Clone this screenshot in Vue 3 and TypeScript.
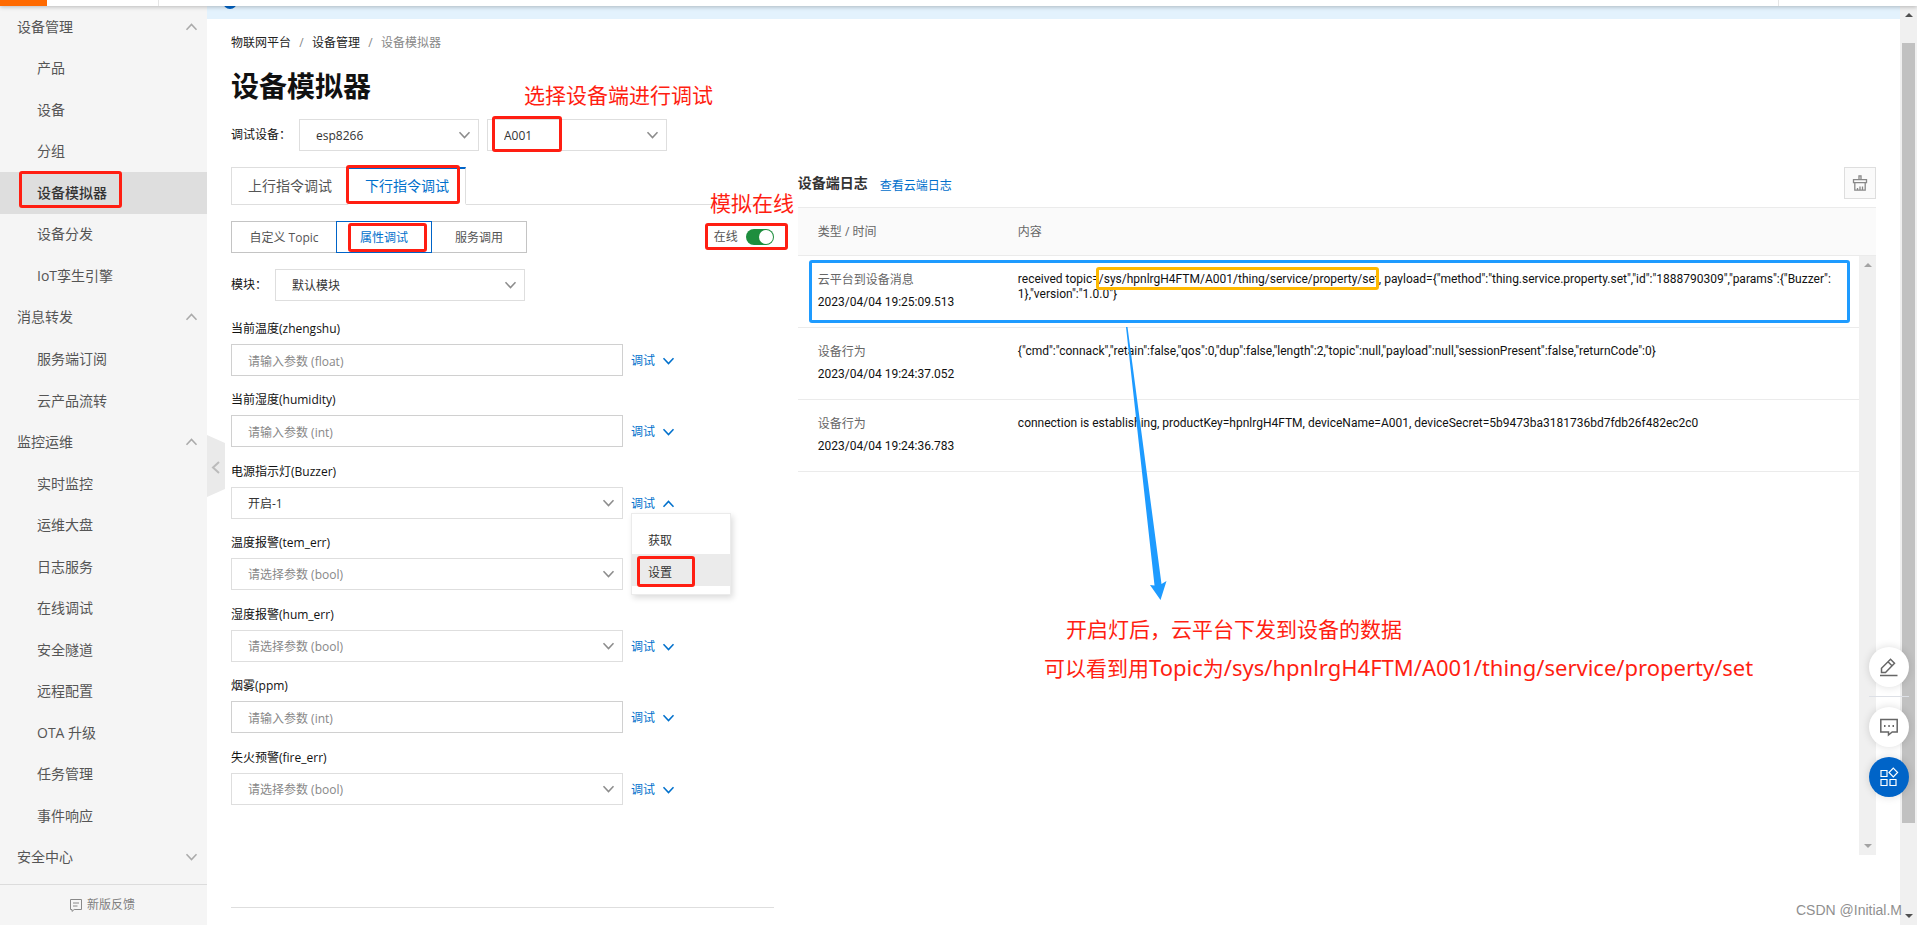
<script setup lang="ts">
import { ref } from 'vue'

interface NavRow {
  label: string
  level: 1 | 2
  open?: boolean
  active?: boolean
}

interface Field {
  id: string
  name: string
  kind: 'input' | 'select'
  hint: string
  value?: string
  open?: boolean
  covered?: boolean
}

interface LogRow {
  type: string
  time: string
  content: string
}

const nav: NavRow[] = [
  { label: '设备管理', level: 1, open: true },
  { label: '产品', level: 2 },
  { label: '设备', level: 2 },
  { label: '分组', level: 2 },
  { label: '设备模拟器', level: 2, active: true },
  { label: '设备分发', level: 2 },
  { label: 'IoT孪生引擎', level: 2 },
  { label: '消息转发', level: 1, open: true },
  { label: '服务端订阅', level: 2 },
  { label: '云产品流转', level: 2 },
  { label: '监控运维', level: 1, open: true },
  { label: '实时监控', level: 2 },
  { label: '运维大盘', level: 2 },
  { label: '日志服务', level: 2 },
  { label: '在线调试', level: 2 },
  { label: '安全隧道', level: 2 },
  { label: '远程配置', level: 2 },
  { label: 'OTA 升级', level: 2 },
  { label: '任务管理', level: 2 },
  { label: '事件响应', level: 2 },
  { label: '安全中心', level: 1, open: false },
]

const fields: Field[] = [
  { id: 'zhengshu', name: '当前温度(zhengshu)', kind: 'input', hint: '请输入参数 (float)' },
  { id: 'humidity', name: '当前湿度(humidity)', kind: 'input', hint: '请输入参数 (int)' },
  { id: 'buzzer', name: '电源指示灯(Buzzer)', kind: 'select', hint: '请选择参数 (bool)', value: '开启-1', open: true },
  { id: 'tem_err', name: '温度报警(tem_err)', kind: 'select', hint: '请选择参数 (bool)', covered: true },
  { id: 'hum_err', name: '湿度报警(hum_err)', kind: 'select', hint: '请选择参数 (bool)' },
  { id: 'ppm', name: '烟雾(ppm)', kind: 'input', hint: '请输入参数 (int)' },
  { id: 'fire_err', name: '失火预警(fire_err)', kind: 'select', hint: '请选择参数 (bool)' },
]

const logs: LogRow[] = [
  {
    type: '云平台到设备消息',
    time: '2023/04/04 19:25:09.513',
    content:
      'received topic=/sys/hpnlrgH4FTM/A001/thing/service/property/set, payload={"method":"thing.service.property.set","id":"1888790309","params":{"Buzzer":\n1},"version":"1.0.0"}',
  },
  {
    type: '设备行为',
    time: '2023/04/04 19:24:37.052',
    content:
      '{"cmd":"connack","retain":false,"qos":0,"dup":false,"length":2,"topic":null,"payload":null,"sessionPresent":false,"returnCode":0}',
  },
  {
    type: '设备行为',
    time: '2023/04/04 19:24:36.783',
    content:
      'connection is establishing, productKey=hpnlrgH4FTM, deviceName=A001, deviceSecret=5b9473ba3181736bd7fdb26f482ec2c0',
  },
]

const online = ref(true)
</script>

<template>
  <div class="page">
    <header class="topbar">
      <span class="brand"></span>
      <span class="menu-cell"></span>
      <span class="user-cell"></span>
    </header>

    <aside class="sidebar">
      <nav class="nav">
        <template v-for="row in nav" :key="row.label">
          <button v-if="row.level === 1" type="button" class="nav-row group">
            <span>{{ row.label }}</span>
            <svg class="chev" :class="{ up: row.open }" viewBox="0 0 12 8"><path d="M1 1.2 6 6.6 11 1.2" /></svg>
          </button>
          <a v-else href="#" class="nav-row item" :class="{ active: row.active }">{{ row.label }}</a>
        </template>
      </nav>
      <a href="#" class="feedback">
        <svg viewBox="0 0 12 13"><path d="M.5.5h11v10H4.2L2 12.4v-1.9H.5zM3 4h6M3 7h4.5" /></svg>
        <span>新版反馈</span>
      </a>
    </aside>

    <main class="main">
      <button type="button" class="collapse" aria-label="collapse">
        <svg viewBox="0 0 18 62">
          <path class="tab-shape" d="M0 0 18 8v46L0 62z" />
          <path class="tab-arrow" d="M12 27 6 32.5 12 38" />
        </svg>
      </button>

      <div class="notice"><i class="notice-icon"></i></div>

      <div class="content">
        <nav class="crumbs">
          <a href="#">物联网平台</a><i>/</i><a href="#">设备管理</a><i>/</i><span>设备模拟器</span>
        </nav>
        <h1>设备模拟器</h1>

        <div class="device-row">
          <label for="product">调试设备：</label>
          <span class="select product">
            <select id="product"><option>esp8266</option></select>
            <svg class="chev" viewBox="0 0 12 8"><path d="M1 1.2 6 6.6 11 1.2" /></svg>
          </span>
          <span class="select device">
            <select aria-label="device"><option>A001</option></select>
            <svg class="chev" viewBox="0 0 12 8"><path d="M1 1.2 6 6.6 11 1.2" /></svg>
          </span>
        </div>

        <div class="workspace">
          <section class="debug">
            <div class="tabs">
              <button type="button" class="tab">上行指令调试</button>
              <button type="button" class="tab current">下行指令调试</button>
            </div>

            <div class="mode-row">
              <div class="modes">
                <button type="button" class="mode first">自定义 Topic</button>
                <button type="button" class="mode current">属性调试</button>
                <button type="button" class="mode">服务调用</button>
              </div>
              <label class="online">
                <span>在线</span>
                <input v-model="online" type="checkbox" role="switch" />
              </label>
            </div>

            <div class="module-row">
              <label for="module">模块：</label>
              <span class="select module">
                <select id="module"><option>默认模块</option></select>
                <svg class="chev" viewBox="0 0 12 8"><path d="M1 1.2 6 6.6 11 1.2" /></svg>
              </span>
            </div>

            <form class="fields" @submit.prevent>
              <div v-for="f in fields" :key="f.id" class="field">
                <label :for="f.id">{{ f.name }}</label>
                <div class="field-row">
                  <input v-if="f.kind === 'input'" :id="f.id" type="text" class="text" :placeholder="f.hint" />
                  <span v-else class="select wide">
                    <select :id="f.id" :class="{ empty: !f.value }"><option>{{ f.value ?? f.hint }}</option></select>
                    <svg class="chev" viewBox="0 0 12 8"><path d="M1 1.2 6 6.6 11 1.2" /></svg>
                  </span>
                  <div v-if="!f.covered" class="action">
                    <button type="button" class="debug-btn">
                      <span>调试</span>
                      <svg class="chev" :class="{ up: f.open }" viewBox="0 0 12 8"><path d="M1 1.2 6 6.6 11 1.2" /></svg>
                    </button>
                    <div v-if="f.open" class="popup">
                      <button type="button">获取</button>
                      <button type="button" class="hover">设置</button>
                    </div>
                  </div>
                </div>
              </div>
            </form>
          </section>

          <section class="log">
            <div class="log-head">
              <h2>设备端日志</h2>
              <a href="#">查看云端日志</a>
              <button type="button" class="clear" aria-label="clear">
                <svg viewBox="0 0 16 16">
                  <path d="M7 4.5V.8h2v3.7M1.500 4.700h13v3h-13zM2.800 7.700v7.500h10.400V7.700M5.500 15v-2M8 15v-3.500M10.500 15v-3.500" />
                </svg>
              </button>
            </div>
            <div class="log-body">
              <table>
                <thead>
                  <tr><th class="col-type">类型 / 时间</th><th>内容</th></tr>
                </thead>
                <tbody>
                  <tr v-for="l in logs" :key="l.time">
                    <td class="meta"><span class="type">{{ l.type }}</span><span class="time">{{ l.time }}</span></td>
                    <td class="text-cell">{{ l.content }}</td>
                  </tr>
                </tbody>
              </table>
              <div class="inner-scroll"><i class="tri up"></i><i class="tri down"></i></div>
            </div>
          </section>
        </div>
      </div>
    </main>

    <div class="page-scroll"><i class="tri up"></i><span class="thumb"></span><i class="tri down"></i></div>

    <div class="float-tools">
      <button type="button" aria-label="edit">
        <svg viewBox="0 0 20 20"><path d="M2.5 15.500v-4.300L11.500 2.300l4 4-9 9.200zM9 4.800l4 4M1 18.500h17.500" /></svg>
      </button>
      <hr />
      <button type="button" aria-label="chat">
        <svg viewBox="0 0 20 20"><path d="M1.800 2.500h16.400v12.500h-5L9.500 18v-3H1.800z" /><path class="dots" d="M5 9h1.500M9.300 9h1.500M13.500 9H15" /></svg>
      </button>
      <button type="button" class="primary" aria-label="apps">
        <svg viewBox="0 0 20 20"><path d="M2 3.500h6v6H2zM2 12.500h6v6H2zM11 12.500h6v6h-6zM14.300 1.200l4.300 4.300-4.300 4.300L10 5.500z" /></svg>
      </button>
    </div>

    <div class="marks">
      <i class="box red m-nav"></i>
      <i class="box red m-device"></i>
      <i class="box red m-tab"></i>
      <i class="box red m-mode"></i>
      <i class="box red m-online"></i>
      <i class="box red m-set"></i>
      <i class="box blue m-log"></i>
      <i class="box yellow m-topic"></i>
      <svg class="arrow" viewBox="0 0 44 274"><path d="M0 0H1.500L35.500 257 40.500 254 34.500 273 24 258 28.500 258.500z" /></svg>
      <p class="note n-choose">选择设备端进行调试</p>
      <p class="note n-online">模拟在线</p>
      <p class="note n-open">开启灯后，云平台下发到设备的数据</p>
      <p class="note n-topic">可以看到用<span>Topic</span>为<span>/sys/hpnlrgH4FTM/A001/thing/service/property/set</span></p>
      <p class="credit">CSDN @Initial.M</p>
    </div>
  </div>
</template>

<style>
body {
  overflow: hidden;
}
</style>

<style scoped>
.page {
  position: relative;
  display: flex;
  height: 100vh;
  overflow: hidden;
  background: #fff;
  color: #111;
  font-family: "Open Sans", "Noto Sans CJK SC", sans-serif;
  font-size: 12px;
  line-height: 18px;
}
button, input, select {
  margin: 0;
  font: inherit;
  color: inherit;
  box-sizing: border-box;
}
button {
  padding: 0;
  border: 0;
  background: none;
  text-align: left;
}
a {
  color: inherit;
  text-decoration: none;
}
h1, h2, p {
  margin: 0;
}
.chev {
  flex: none;
  width: 13px;
  height: 8px;
  fill: none;
  stroke: #8c8c8c;
  stroke-width: 1.5;
}
.chev.up {
  transform: rotate(180deg);
}

.topbar {
  position: absolute;
  inset: 0 0 auto 0;
  z-index: 5;
  display: flex;
  height: 6px;
  background: #fff;
  box-shadow: 0 1px 4px rgba(0, 0, 0, 0.25);
}
.brand {
  width: 47px;
  background: #ff6a00;
}
.menu-cell {
  width: 111px;
  border-right: 1px solid #e5e5e5;
}
.user-cell {
  width: 138px;
  margin-left: auto;
  border-left: 1px solid #e5e5e5;
}

.sidebar {
  display: flex;
  flex: none;
  flex-direction: column;
  width: 207px;
  background: #f5f5f5;
  color: #555;
  font-size: 14px;
}
.nav {
  display: flex;
  flex: 1;
  flex-direction: column;
  padding: 6px 0;
}
.nav-row {
  display: flex;
  flex: 1;
  align-items: center;
  justify-content: space-between;
}
.group {
  padding: 0 9px 0 17px;
}
.group .chev {
  stroke: #aaa;
}
.item {
  padding-left: 37px;
}
.item.active {
  background: #dedede;
  color: #333;
  font-weight: 500;
}
.feedback {
  display: flex;
  align-items: center;
  justify-content: center;
  gap: 5px;
  height: 40px;
  padding-right: 2px;
  border-top: 1px solid #dcdcdc;
  color: #808080;
  font-size: 12px;
}
.feedback svg {
  width: 12px;
  height: 13px;
  fill: none;
  stroke: #888;
}

.main {
  position: relative;
  flex: 1;
  min-width: 0;
  padding-top: 6px;
}
.collapse {
  position: absolute;
  top: 435px;
  left: 0;
  width: 18px;
  height: 62px;
}
.collapse svg {
  display: block;
}
.tab-shape {
  fill: #eaeaea;
}
.tab-arrow {
  fill: none;
  stroke: #bbb;
  stroke-width: 2;
}
.notice {
  position: relative;
  height: 13px;
  background: #e3f2fd;
}
.notice-icon {
  position: absolute;
  top: -11px;
  left: 16px;
  width: 14px;
  height: 14px;
  border-radius: 50%;
  background: #0064c8;
}
.content {
  padding: 15px 24px 0;
}
.crumbs {
  display: flex;
  color: #222;
}
.crumbs i {
  width: 21px;
  color: #888;
  font-style: normal;
  text-align: center;
}
.crumbs span {
  color: #888;
}
h1 {
  margin-top: 16px;
  font-size: 28px;
  font-weight: 700;
  line-height: 36px;
}
.device-row, .module-row {
  display: flex;
  align-items: center;
}
.device-row {
  margin-top: 15px;
}
.device-row label {
  width: 68px;
  white-space: nowrap;
}
.device {
  margin-left: 8px;
}
.select {
  position: relative;
  display: flex;
  align-items: center;
  height: 32px;
}
.product, .device {
  width: 180px;
}
.select select {
  width: 100%;
  height: 32px;
  padding: 2px 36px 0 16px;
  border: 1px solid #dedede;
  border-radius: 0;
  background: #fff;
  color: #333;
  appearance: none;
}
.select select.empty {
  color: #888;
}
.select .chev {
  position: absolute;
  right: 8px;
  pointer-events: none;
}

.workspace {
  display: flex;
  gap: 24px;
  margin-top: 16px;
}
.debug {
  flex: 0 0 33%;
  min-height: 740px;
  border-bottom: 1px solid #dedede;
}
.tabs {
  display: flex;
  height: 38px;
}
.tabs::after {
  flex: 1;
  border-bottom: 1px solid #dedede;
  content: "";
}
.tab {
  padding: 0 16px;
  border: 1px solid #dedede;
  border-right: 0;
  color: #555;
  font-size: 14px;
}
.tab.current {
  border-top: 2px solid #0064c8;
  border-right: 1px solid #dedede;
  border-bottom: 2px solid #fff;
  color: #0070cc;
}
.mode-row {
  display: flex;
  align-items: center;
  justify-content: space-between;
  margin-top: 16px;
}
.modes {
  display: flex;
}
.mode {
  width: 95px;
  height: 32px;
  padding-top: 2px;
  border: 1px solid #c4c4c4;
  border-left: 0;
  color: #555;
  text-align: center;
}
.mode.first {
  width: 105px;
  border-right: 0;
  border-left: 1px solid #c4c4c4;
}
.mode.current {
  width: 96px;
  border: 1px solid #0064c8;
  color: #0070cc;
}
.online {
  display: flex;
  align-items: center;
  gap: 8px;
  color: #555;
}
.online input {
  position: relative;
  width: 28px;
  height: 16px;
  border-radius: 8px;
  background: #bbb;
  appearance: none;
}
.online input:checked {
  background: #1e8e3e;
}
.online input::before {
  position: absolute;
  top: 1px;
  left: 1px;
  width: 14px;
  height: 14px;
  border-radius: 50%;
  background: #fff;
  content: "";
}
.online input:checked::before {
  left: 13px;
}
.module-row {
  margin-top: 16px;
}
.module-row label {
  width: 44px;
  white-space: nowrap;
}
.module {
  width: 250px;
}
.fields {
  display: grid;
  grid-auto-rows: 1fr;
  height: 500px;
  margin-top: 19px;
}
.field {
  display: flex;
  flex-direction: column;
  gap: 6px;
}
.field-row {
  display: flex;
  gap: 8px;
}
.text, .wide {
  width: 392px;
}
.text {
  height: 32px;
  padding: 2px 16px 0;
  border: 1px solid #d0d0d0;
  border-radius: 0;
  outline: 0;
}
.text::placeholder {
  color: #888;
  opacity: 1;
}
.action {
  position: relative;
}
.debug-btn {
  display: flex;
  align-items: center;
  gap: 7px;
  height: 32px;
  padding-top: 2px;
  color: #0070cc;
}
.debug-btn .chev {
  stroke: #0070cc;
}
.popup {
  position: absolute;
  top: 26px;
  left: 0;
  z-index: 2;
  width: 100px;
  padding: 8px 0;
  box-sizing: border-box;
  border: 1px solid #ebebeb;
  background: #fff;
  box-shadow: 2px 3px 6px rgba(0, 0, 0, 0.14);
}
.popup button {
  display: block;
  width: 100%;
  height: 32px;
  padding: 6px 16px 0;
  color: #333;
}
.popup .hover {
  background: #ebebeb;
}

.log {
  flex: 1;
  min-width: 0;
}
.log-head {
  display: flex;
  align-items: center;
  gap: 12px;
  height: 32px;
}
h2 {
  color: #333;
  font-size: 14px;
  font-weight: 700;
}
.log-head a {
  padding-top: 6px;
  color: #0070cc;
}
.clear {
  display: flex;
  align-items: center;
  justify-content: center;
  width: 32px;
  height: 32px;
  margin-left: auto;
  border: 1px solid #dedede;
  background: #fafafa;
}
.clear svg {
  width: 16px;
  height: 16px;
  fill: none;
  stroke: #888;
  stroke-width: 1.3;
}
.log-body {
  position: relative;
  height: 648px;
  margin-top: 8px;
}
table {
  width: 100%;
  border-collapse: separate;
  border-spacing: 0;
  table-layout: fixed;
}
th {
  height: 47px;
  padding: 0 20px;
  border-top: 1px solid #ebebeb;
  border-bottom: 1px solid #ebebeb;
  background: #fafafa;
  color: #666;
  font-weight: 400;
  text-align: left;
}
.col-type {
  width: 160px;
}
td {
  border-bottom: 1px solid #ebebeb;
  vertical-align: top;
}
.meta {
  height: 59px;
  padding: 12px 20px 0;
}
.meta span {
  display: block;
  line-height: 23px;
}
.type {
  color: #666;
}
.time, .text-cell {
  font-family: Roboto, "Noto Sans CJK SC", sans-serif;
}
.text-cell {
  height: 55px;
  padding: 16px 30px 0 20px;
  line-height: 15px;
  white-space: pre-line;
  overflow-wrap: anywhere;
}
.inner-scroll {
  position: absolute;
  top: 49px;
  right: 0;
  bottom: 0;
  width: 17px;
  background: #f0f0f0;
}
.tri {
  position: absolute;
  left: 50%;
  margin-left: -4px;
  border: 4px solid transparent;
}
.tri.up {
  top: 3px;
  border-bottom-color: #a3a3a3;
}
.tri.down {
  bottom: 3px;
  border-top-color: #a3a3a3;
}

.page-scroll {
  position: relative;
  flex: none;
  width: 17px;
  background: #f0f0f0;
}
.page-scroll .tri.up {
  top: 9px;
  border-bottom-color: #505050;
}
.page-scroll .tri.down {
  border-top-color: #505050;
}
.thumb {
  position: absolute;
  top: 43px;
  bottom: 102px;
  left: 2px;
  width: 13px;
  background: #c1c1c1;
}

.float-tools {
  position: absolute;
  right: 8px;
  bottom: 128px;
  z-index: 6;
  width: 40px;
}
.float-tools button {
  display: flex;
  align-items: center;
  justify-content: center;
  width: 40px;
  height: 40px;
  border-radius: 50%;
  background: #fff;
  box-shadow: 0 0 8px rgba(0, 0, 0, 0.14);
}
.float-tools hr {
  height: 1px;
  margin: 9px 0 10px;
  border: 0;
  background: #dde0e6;
}
.float-tools svg {
  width: 20px;
  height: 20px;
  fill: none;
  stroke: #666;
  stroke-width: 1.5;
}
.float-tools .dots {
  stroke-width: 2;
}
.float-tools .primary {
  margin-top: 10px;
  background: #0064c8;
}
.float-tools .primary svg {
  stroke: #fff;
  stroke-width: 1.2;
}

.marks {
  position: absolute;
  inset: 0;
  z-index: 7;
  pointer-events: none;
}
.box {
  position: absolute;
  box-sizing: border-box;
  border: 3px solid;
  border-radius: 3px;
}
.red { border-color: #ff1e12; }
.blue { border-color: #1e9bff; }
.yellow { border-color: #ffb900; }
.m-nav { top: 171px; left: 19px; width: 103px; height: 37px; }
.m-device { top: 116px; left: 492px; width: 70px; height: 36px; }
.m-tab { top: 165px; left: 346px; width: 114px; height: 39px; }
.m-mode { top: 223px; left: 348px; width: 79px; height: 29px; }
.m-online { top: 223px; left: 705px; width: 83px; height: 27px; }
.m-set { top: 556px; left: 637px; width: 58px; height: 31px; }
.m-log { top: 260px; left: 809px; width: 1041px; height: 63px; }
.m-topic { top: 267px; left: 1096px; width: 283px; height: 23px; }
.arrow {
  position: absolute;
  top: 327px;
  left: 1126px;
  width: 44px;
  height: 274px;
  fill: #1e9bff;
}
.note {
  position: absolute;
  color: #ff1e12;
  font-family: "Noto Sans", "Noto Sans CJK SC", sans-serif;
  font-size: 21px;
  line-height: 28px;
  white-space: nowrap;
}
.note span {
  font-size: 22px;
}
.n-choose { top: 81px; left: 524px; }
.n-online { top: 189px; left: 710px; }
.n-open { top: 615px; left: 1066px; }
.n-topic { top: 653px; left: 1044px; }
.credit {
  position: absolute;
  right: 15px;
  bottom: 6px;
  color: #909090;
  font-family: "Liberation Sans", sans-serif;
  font-size: 14px;
}
</style>
